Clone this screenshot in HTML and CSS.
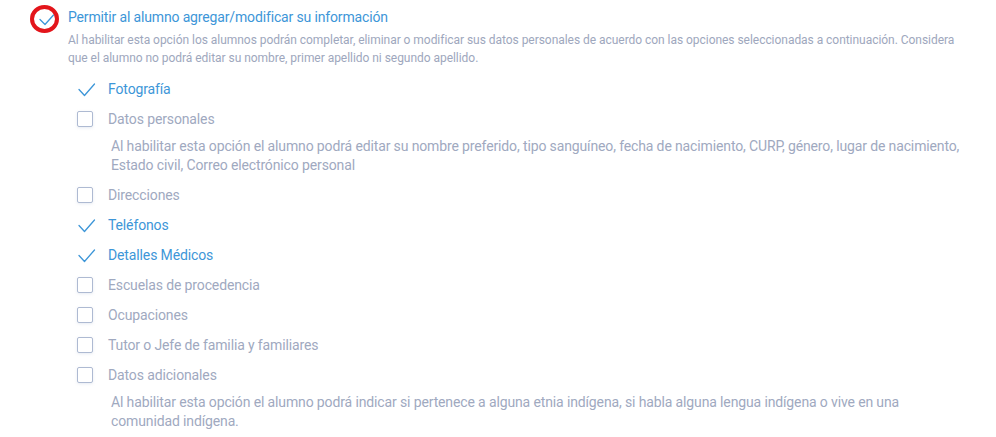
FILE: index.html
```html
<!DOCTYPE html>
<html lang="es">
<head>
<meta charset="utf-8">
<link rel="stylesheet" href="styles.css">
</head>
<body>
<div class="page">
  <div class="option main">
    <span class="box checked">
      <svg viewBox="0 0 16 16" width="16" height="16"><path d="M3 10.5 L8 15.5 L16.5 6"/></svg>
      <span class="annot"></span>
    </span>
    <div class="body">
      <div class="label">Permitir al alumno agregar/modificar su información</div>
      <p class="desc">Al habilitar esta opción los alumnos podrán completar, eliminar o modificar sus datos personales de acuerdo con las opciones seleccionadas a continuación. Considera que el alumno no podrá editar su nombre, primer apellido ni segundo apellido.</p>
    </div>
  </div>

  <ul class="sublist">
    <li class="item on"><span class="box checked"><svg viewBox="0 0 16 16" width="16" height="16"><path d="M2 8.5 L7.5 14.5 L17.5 3"/></svg></span><span class="label">Fotografía</span></li>
    <li class="item"><span class="box"></span><span class="label">Datos personales</span></li>
    <li class="subdesc">Al habilitar esta opción el alumno podrá editar su nombre preferido, tipo sanguíneo, fecha de nacimiento, CURP, género, lugar de nacimiento, Estado civil, Correo electrónico personal</li>
    <li class="item"><span class="box"></span><span class="label">Direcciones</span></li>
    <li class="item on"><span class="box checked"><svg viewBox="0 0 16 16" width="16" height="16"><path d="M2 8.5 L7.5 14.5 L17.5 3"/></svg></span><span class="label">Teléfonos</span></li>
    <li class="item on"><span class="box checked"><svg viewBox="0 0 16 16" width="16" height="16"><path d="M2 8.5 L7.5 14.5 L17.5 3"/></svg></span><span class="label">Detalles Médicos</span></li>
    <li class="item"><span class="box"></span><span class="label">Escuelas de procedencia</span></li>
    <li class="item"><span class="box"></span><span class="label">Ocupaciones</span></li>
    <li class="item"><span class="box"></span><span class="label">Tutor o Jefe de familia y familiares</span></li>
    <li class="item"><span class="box"></span><span class="label">Datos adicionales</span></li>
    <li class="subdesc">Al habilitar esta opción el alumno podrá indicar si pertenece a alguna etnia indígena, si habla alguna lengua indígena o vive en una comunidad indígena.</li>
  </ul>
</div>
</body>
</html>
```
FILE: styles.css
```css
* { box-sizing: border-box; }
html, body { margin: 0; background: #ffffff; }
body {
  font-family: Roboto, "Open Sans", sans-serif;
  color: #a0a9bf;
}
.page {
  padding: 7px 0 0 37px;
}
.option.main {
  display: flex;
  gap: 15px;
}
.box {
  position: relative;
  flex: 0 0 16px;
  width: 16px;
  height: 16px;
  border: 1.5px solid #aebad2;
  border-radius: 2px;
  box-shadow: 0 1px 3px rgba(160, 175, 205, 0.25);
  background: #fff;
}
.box.checked {
  border-color: transparent;
  box-shadow: none;
  background: transparent;
}
.box svg {
  position: absolute;
  left: -1.5px;
  top: -1.5px;
  overflow: visible;
}
.box svg path {
  fill: none;
  stroke: #3d96d8;
  stroke-width: 1.3;
  stroke-linecap: round;
  stroke-linejoin: round;
}
.main .box { margin-top: 2px; }
.annot {
  position: absolute;
  left: -8.5px;
  top: -5.5px;
  width: 29px;
  height: 28px;
  border: 4px solid #e3151b;
  border-radius: 50%;
}
.main .label {
  font-size: 14px;
  line-height: 20px;
  letter-spacing: -0.15px;
  color: #3d96d8;
}
.desc {
  margin: 4px 0 0;
  width: 900px;
  font-size: 12px;
  line-height: 18px;
  letter-spacing: -0.04px;
  color: #9ea7bd;
}
.sublist {
  list-style: none;
  margin: 7px 0 0 40px;
  padding: 0;
}
.item {
  display: flex;
  align-items: center;
  gap: 15px;
  height: 30px;
}
.item .label {
  font-size: 14px;
  letter-spacing: -0.13px;
  color: #a0a9bf;
}
.item.on .label { color: #3d96d8; }
.subdesc {
  margin: 3px 0 5px 34px;
  width: 860px;
  font-size: 14px;
  line-height: 19px;
  letter-spacing: -0.13px;
  color: #a0a9bf;
}
```
